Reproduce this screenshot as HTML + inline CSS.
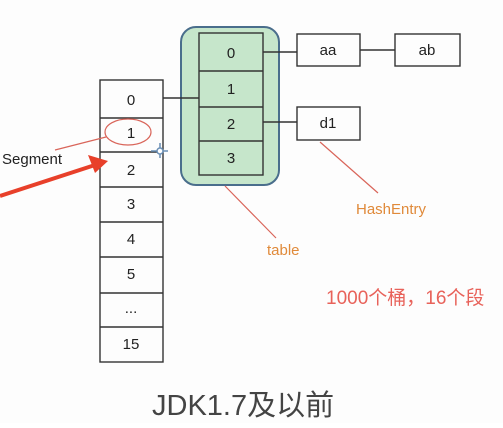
<!DOCTYPE html><html><head><style>body{margin:0;background:#fff;width:503px;height:423px;overflow:hidden}</style></head><body>
<svg width="503" height="423" xmlns="http://www.w3.org/2000/svg" font-family="Liberation Sans, sans-serif">
<rect width="503" height="423" fill="#fdfdfd"/>
<rect x="181" y="27" width="98" height="158" rx="15" fill="#c6e6cb" stroke="#4a6e8c" stroke-width="2"/>
<g stroke="#333" stroke-width="1.4" fill="none">
<rect x="100" y="80" width="63" height="282"/>
<path d="M100 118H163M100 152H163M100 187H163M100 222H163M100 257H163M100 293H163M100 327H163"/>
<rect x="199" y="33" width="64" height="142"/>
<path d="M199 71H263M199 107H263M199 141H263"/>
<rect x="297" y="34" width="63" height="32"/>
<rect x="395" y="34" width="65" height="32"/>
<rect x="297" y="107" width="63" height="33"/>
<path d="M163 98H199M263 52H297M360 50H395M263 122H297"/>
</g>
<g stroke="#d9655a" stroke-width="1.2" fill="none">
<ellipse cx="128" cy="132" rx="23" ry="13"/>
<path d="M55 150L106 137M225 186L276 238M320 142L378 193"/>
</g>
<path d="M0 196L95 165" stroke="#e8402a" stroke-width="4"/>
<path d="M108 161L88 155L95 173Z" fill="#e8402a"/>
<path d="M151 151H168M160 143V158" stroke="#6a8fb5" stroke-width="1.5"/>
<circle cx="160" cy="151" r="3" fill="#fff" stroke="#6a8fb5" stroke-width="1.5"/>
<g font-size="15" fill="#222" text-anchor="middle">
<text x="131" y="105">0</text><text x="131" y="138">1</text><text x="131" y="175">2</text><text x="131" y="209">3</text><text x="131" y="244">4</text><text x="131" y="279">5</text><text x="131" y="313">...</text><text x="131" y="349">15</text>
<text x="231" y="58">0</text><text x="231" y="94">1</text><text x="231" y="129">2</text><text x="231" y="163">3</text>
<text x="328" y="55">aa</text><text x="427" y="55">ab</text><text x="328" y="128">d1</text>
</g>
<text x="2" y="164" font-size="15" fill="#222">Segment</text>
<text x="356" y="214" font-size="15" fill="#e08a3a">HashEntry</text>
<text x="267" y="255" font-size="15" fill="#e08a3a">table</text>
<text x="326" y="304" font-size="19" fill="#e8625a" font-family="Liberation Sans, Noto Sans CJK SC, sans-serif">1000个桶，16个段</text>
<text x="152" y="415" font-size="29" fill="#444" font-family="Liberation Sans, Noto Sans CJK SC, sans-serif">JDK1.7及以前</text>
</svg></body></html>
